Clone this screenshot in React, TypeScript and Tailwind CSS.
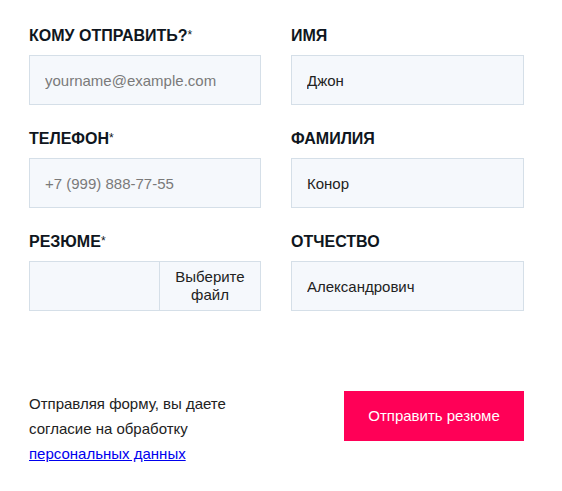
const fields = {
  left: [
    { label: "Кому отправить?", required: true, placeholder: "yourname@example.com" },
    { label: "Телефон", required: true, placeholder: "+7 (999) 888-77-55" },
  ],
  right: [
    { label: "Имя", value: "Джон" },
    { label: "Фамилия", value: "Конор" },
    { label: "Отчество", value: "Александрович" },
  ],
};

function Label({ text, required }: { text: string; required?: boolean }) {
  return (
    <div className="h-5 mb-[9px] text-[16px] leading-5 font-bold uppercase text-[#0f1620]">
      {text}
      {required && <span className="font-normal text-[12px] align-top relative -top-[1px]">*</span>}
    </div>
  );
}

function Input({ placeholder, value }: { placeholder?: string; value?: string }) {
  return (
    <input
      type="text"
      defaultValue={value}
      placeholder={placeholder}
      className="w-full h-[50px] px-[15px] bg-[#f5f8fc] border border-[#d5dfe8] text-[15px] text-[#222] placeholder:text-[#7a7a7a] outline-none"
    />
  );
}

export default function App() {
  return (
    <div className="w-[562px] h-[491px] bg-white pt-[26px] pl-[29px] font-['Liberation_Sans',Arial,sans-serif]">
      <div className="grid grid-cols-[232px_233px] gap-x-[30px] gap-y-[24px]">
        <div>
          <Label text={fields.left[0].label} required />
          <Input placeholder={fields.left[0].placeholder} />
        </div>
        <div>
          <Label text={fields.right[0].label} />
          <Input value={fields.right[0].value} />
        </div>
        <div>
          <Label text={fields.left[1].label} required />
          <Input placeholder={fields.left[1].placeholder} />
        </div>
        <div>
          <Label text={fields.right[1].label} />
          <Input value={fields.right[1].value} />
        </div>
        <div>
          <Label text="Резюме" required />
          <div className="flex h-[50px] bg-[#f5f8fc] border border-[#d5dfe8]">
            <div className="flex-1" />
            <button
              type="button"
              className="w-[101px] border-l border-[#d5dfe8] text-[15px] leading-[18px] text-[#222] text-center"
            >
              Выберите
              <br />
              файл
            </button>
          </div>
        </div>
        <div>
          <Label text={fields.right[2].label} />
          <Input value={fields.right[2].value} />
        </div>
      </div>

      <div className="flex items-start mt-[80px] w-[495px]">
        <p className="w-[232px] text-[15px] leading-[25px] text-[#222]">
          Отправляя форму, вы даете согласие на обработку{" "}
          <a href="#" className="text-[#0000ee] underline">
            персональных данных
          </a>
        </p>
        <button
          type="button"
          className="ml-auto w-[180px] h-[50px] bg-[#ff0057] text-white text-[15px]"
        >
          Отправить резюме
        </button>
      </div>
    </div>
  );
}
